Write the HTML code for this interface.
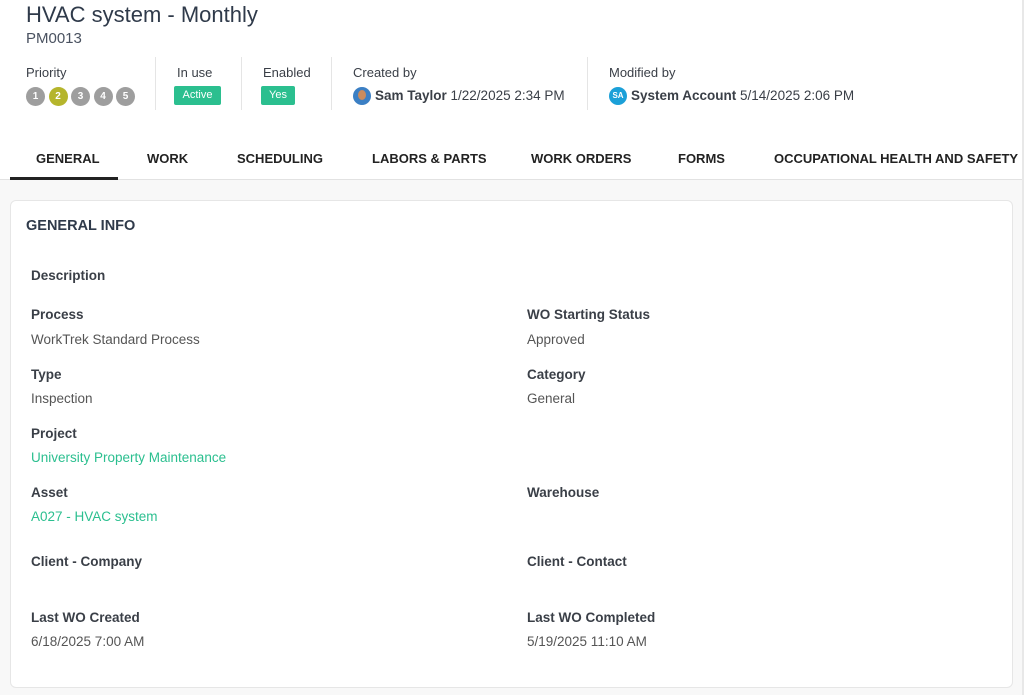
<!DOCTYPE html><html><head><style>
*{margin:0;padding:0;box-sizing:border-box}
body{width:1024px;height:695px;background:#fff;font-family:"Liberation Sans",sans-serif;color:#3a3f47;position:relative;overflow:hidden}
.a{position:absolute;white-space:nowrap}
.lbl{font-size:13px;color:#3a3f47}
.b{font-weight:bold}
.dot{display:inline-block;width:19px;height:19px;border-radius:50%;background:#9e9e9e;color:#fff;font-size:10px;font-weight:bold;text-align:center;line-height:19px;margin-right:3.5px}
.badge{background:#2bbf8f;color:#fff;font-size:11px;height:19px;line-height:19px;text-align:center;border-radius:2px}
.sep{position:absolute;top:57px;width:1px;height:53px;background:#e5e5e5}
.tab{position:absolute;top:151px;font-size:13px;font-weight:bold;color:#222}
.fl{font-size:13.5px;font-weight:bold;color:#3a3f47}
.fv{font-size:13.5px;color:#555}
.g{color:#2bbf8f}
</style></head><body>
<div class="a" style="left:26px;top:2px;font-size:22px;color:#2f3a4a">HVAC system - Monthly</div>
<div class="a" style="left:26px;top:30px;font-size:15px;color:#4a5260">PM0013</div>
<div class="a lbl" style="left:26px;top:65px">Priority</div>
<div class="a" style="left:26px;top:86px"><span class="dot">1</span><span class="dot" style="background:#b5b52c">2</span><span class="dot">3</span><span class="dot">4</span><span class="dot">5</span></div>
<div class="sep" style="left:155px"></div>
<div class="a lbl" style="left:177px;top:65px">In use</div>
<div class="a badge" style="left:174px;top:86px;width:47px">Active</div>
<div class="sep" style="left:241px"></div>
<div class="a lbl" style="left:263px;top:65px">Enabled</div>
<div class="a badge" style="left:261px;top:86px;width:34px">Yes</div>
<div class="sep" style="left:331px"></div>
<div class="a lbl" style="left:353px;top:65px">Created by</div>
<div class="a" style="left:353px;top:87px;width:18px;height:18px;border-radius:50%;background:#3b7fc4;overflow:hidden"><div style="position:absolute;left:5px;top:3px;width:8px;height:10px;border-radius:50%;background:#c98b5e"></div></div>
<div class="a" style="left:375px;top:88px;font-size:13.5px"><b>Sam Taylor</b> 1/22/2025 2:34 PM</div>
<div class="sep" style="left:587px"></div>
<div class="a lbl" style="left:609px;top:65px">Modified by</div>
<div class="a" style="left:609px;top:87px;width:18px;height:18px;border-radius:50%;background:#1ba0d8;color:#fff;font-size:8px;font-weight:bold;text-align:center;line-height:18px">SA</div>
<div class="a" style="left:631px;top:88px;font-size:13.5px"><b>System Account</b> 5/14/2025 2:06 PM</div>
<div class="tab" style="left:36px">GENERAL</div>
<div class="tab" style="left:147px">WORK</div>
<div class="tab" style="left:237px">SCHEDULING</div>
<div class="tab" style="left:372px">LABORS &amp; PARTS</div>
<div class="tab" style="left:531px">WORK ORDERS</div>
<div class="tab" style="left:678px">FORMS</div>
<div class="tab" style="left:774px">OCCUPATIONAL HEALTH AND SAFETY</div>
<div class="a" style="left:0;top:179px;width:1022px;height:516px;background:#f8f8f8;border-top:1px solid #e2e2e2"></div>
<div class="a" style="left:10px;top:177px;width:108px;height:3px;background:#222"></div>
<div class="a" style="left:1022px;top:0;width:2px;height:695px;background:#e8e8e8"></div>
<div class="a" style="left:10px;top:200px;width:1003px;height:488px;background:#fff;border:1px solid #e6e6e6;border-radius:6px"></div>
<div class="a" style="left:26px;top:218px;font-size:14.5px;font-weight:bold;color:#2f3a4a">GENERAL INFO</div>
<div class="a fl" style="left:31px;top:268px">Description</div>
<div class="a fl" style="left:31px;top:307px">Process</div><div class="a fv" style="left:31px;top:332px">WorkTrek Standard Process</div>
<div class="a fl" style="left:527px;top:307px">WO Starting Status</div><div class="a fv" style="left:527px;top:332px">Approved</div>
<div class="a fl" style="left:31px;top:367px">Type</div><div class="a fv" style="left:31px;top:391px">Inspection</div>
<div class="a fl" style="left:527px;top:367px">Category</div><div class="a fv" style="left:527px;top:391px">General</div>
<div class="a fl" style="left:31px;top:426px">Project</div><div class="a fv g" style="left:31px;top:450px">University Property Maintenance</div>
<div class="a fl" style="left:31px;top:485px">Asset</div><div class="a fv g" style="left:31px;top:509px">A027 - HVAC system</div>
<div class="a fl" style="left:527px;top:485px">Warehouse</div>
<div class="a fl" style="left:31px;top:554px">Client - Company</div>
<div class="a fl" style="left:527px;top:554px">Client - Contact</div>
<div class="a fl" style="left:31px;top:610px">Last WO Created</div><div class="a fv" style="left:31px;top:634px">6/18/2025 7:00 AM</div>
<div class="a fl" style="left:527px;top:610px">Last WO Completed</div><div class="a fv" style="left:527px;top:634px">5/19/2025 11:10 AM</div>
</body></html>
